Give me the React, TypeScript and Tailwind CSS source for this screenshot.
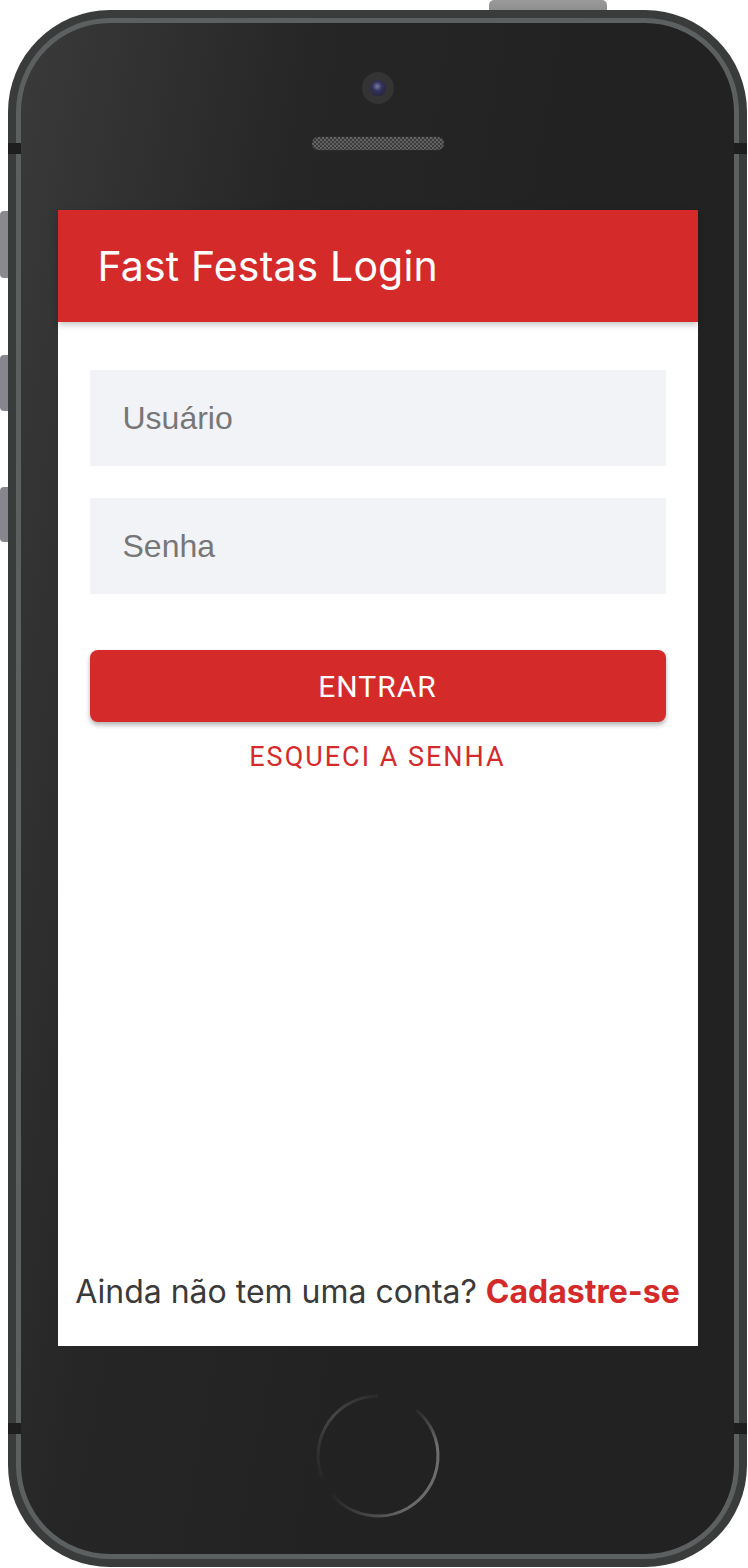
import React from "react";

function HomeButton() {
  const cx = 63, cy = 63, r = 60;
  const pt = (deg: number) => {
    const a = (deg * Math.PI) / 180;
    return `${cx + r * Math.sin(a)} ${cy - r * Math.cos(a)}`;
  };
  const arc = (a1: number, a2: number) =>
    `M ${pt(a1)} A ${r} ${r} 0 ${a2 - a1 > 180 ? 1 : 0} 1 ${pt(a2)}`;
  return (
    <svg width="126" height="126" viewBox="0 0 126 126">
      <defs>
        <linearGradient id="hbR" x1="0" y1="0" x2="0" y2="1">
          <stop offset="0" stopColor="#2a2a2a" />
          <stop offset="0.35" stopColor="#6e6e6e" />
          <stop offset="1" stopColor="#6a6a6a" />
        </linearGradient>
        <linearGradient id="hbB" x1="1" y1="0" x2="0" y2="0">
          <stop offset="0" stopColor="#6a6a6a" />
          <stop offset="1" stopColor="#262626" />
        </linearGradient>
        <linearGradient id="hbL" x1="0" y1="1" x2="1" y2="0">
          <stop offset="0" stopColor="#262626" />
          <stop offset="0.5" stopColor="#474747" />
          <stop offset="1" stopColor="#2a2a2a" />
        </linearGradient>
      </defs>
      <path d={arc(40, 150)} stroke="url(#hbR)" strokeWidth="3" fill="none" />
      <path d={arc(150, 230)} stroke="url(#hbB)" strokeWidth="3" fill="none" />
      <path d={arc(250, 360)} stroke="url(#hbL)" strokeWidth="3" fill="none" />
    </svg>
  );
}

export default function App() {
  return (
    <div className="relative w-[748px] h-[1568px] bg-white overflow-hidden" style={{ fontFamily: "Roboto, 'Liberation Sans', sans-serif" }}>
      {/* top button */}
      <div className="absolute left-[489px] top-0 w-[118px] h-[14px] rounded-t-[5px] bg-gradient-to-b from-[#9a9a9a] to-[#8a8a8a]" />
      {/* side buttons */}
      <div className="absolute left-0 top-[211px] w-[10px] h-[67px] rounded-l-[4px] bg-[#8a8a8e]" />
      <div className="absolute left-0 top-[355px] w-[10px] h-[56px] rounded-l-[4px] bg-[#86868c]" />
      <div className="absolute left-0 top-[487px] w-[10px] h-[55px] rounded-l-[4px] bg-[#86868c]" />

      {/* phone body */}
      <div className="absolute left-[8px] top-[10px] w-[739px] h-[1557px] rounded-[102px] bg-[#3a3c3c] p-[8px]">
        <div className="relative w-full h-full rounded-[94px] border-[5px] border-[#5c6060] bg-[linear-gradient(100deg,#3a3a3a_0%,#262626_30%,#222222_60%,#222222_100%)] flex flex-col items-center">
          {/* top area */}
          <div className="h-[187px] w-full flex flex-col items-center">
            <div className="mt-[49px] w-[32px] h-[32px] rounded-full bg-[#343434] flex items-center justify-center">
              <div className="w-[16px] h-[16px] rounded-full bg-[radial-gradient(circle_at_45%_40%,#7a7aa8_0,#34345a_35%,#1c1c30_100%)]" />
            </div>
            <div className="mt-[32px] w-[134px] h-[15px] rounded-full border border-[#2a2a2a] bg-[repeating-conic-gradient(#626262_0_25%,#3c3c3c_0_50%)] bg-[length:4px_4px]" />
          </div>

          {/* screen */}
          <div className="w-[640px] h-[1136px] bg-white flex flex-col">
            <div className="relative z-10 h-[112px] bg-[#d52a2a] flex items-center pl-[40px] shadow-[0_3px_6px_rgba(0,0,0,0.22)]">
              <span
                className="text-white text-[41px] leading-none tracking-[0.15px]"
                style={{ fontFamily: "Inter, Roboto, sans-serif" }}
              >
                Fast Festas Login
              </span>
            </div>
            <div className="flex-1 flex flex-col px-[32px] pt-[48px]">
              <input
                readOnly
                placeholder="Usuário"
                className="h-[96px] w-full bg-[#f2f3f7] px-[33px] text-[32px] outline-none placeholder:text-[#777777]"
                style={{ fontFamily: "'Liberation Sans', Arial, sans-serif" }}
              />
              <input
                readOnly
                placeholder="Senha"
                className="mt-[32px] h-[96px] w-full bg-[#f2f3f7] px-[33px] text-[32px] outline-none placeholder:text-[#777777]"
                style={{ fontFamily: "'Liberation Sans', Arial, sans-serif" }}
              />
              <button className="mt-[56px] h-[72px] w-full rounded-[8px] bg-[#d52a2a] text-white text-[30px] tracking-[1px] shadow-[0_3px_5px_rgba(0,0,0,0.3)] flex items-center justify-center">
                ENTRAR
              </button>
              <div className="mt-[20px] text-center text-[#d52a2a] text-[27px] tracking-[2px] leading-[30px]">
                ESQUECI A SENHA
              </div>
              <div className="flex-1" />
            </div>
            <div
              className="mb-[34px] text-center text-[32px] leading-[40px] text-[#3a3a3a] whitespace-nowrap"
              style={{ fontFamily: "Inter, 'Liberation Sans', sans-serif" }}
            >
              Ainda não tem uma conta? <span className="font-bold text-[#d52a2a]">Cadastre-se</span>
            </div>
          </div>

          {/* bottom area */}
          <div className="flex-1 w-full flex items-center justify-center">
            <div className="mt-[12px]">
              <HomeButton />
            </div>
          </div>

          {/* notches */}
          <div className="absolute -left-[13px] top-[120px] w-[13px] h-[11px] bg-[#1e1e1e]" />
          <div className="absolute -right-[13px] top-[120px] w-[13px] h-[11px] bg-[#1e1e1e]" />
          <div className="absolute -left-[13px] bottom-[120px] w-[13px] h-[11px] bg-[#1e1e1e]" />
          <div className="absolute -right-[13px] bottom-[120px] w-[13px] h-[11px] bg-[#1e1e1e]" />
        </div>
      </div>
    </div>
  );
}
